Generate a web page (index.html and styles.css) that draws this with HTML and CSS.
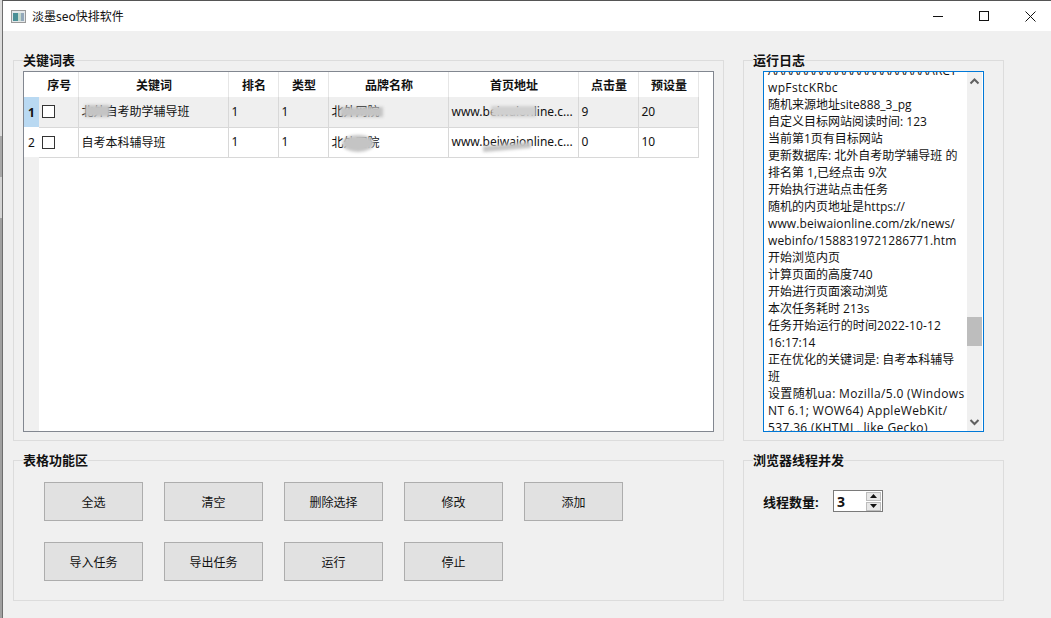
FILE: index.html
```html
<!DOCTYPE html>
<html lang="zh-CN">
<head>
  <meta charset="UTF-8">
  <title>淡墨seo快排软件</title>
  <link rel="stylesheet" href="styles.css">
</head>
<body>

<div class="window">
  <div class="titlebar">
    <svg class="app-icon" width="15" height="13" viewBox="0 0 15 13">
      <rect x="0.5" y="0.5" width="14" height="12" fill="#e4e8ea" stroke="#9a9a9a"/>
      <rect x="2" y="3" width="5" height="8" fill="#4a8f96"/>
      <rect x="7" y="3" width="3" height="8" fill="#c3d8cc"/>
      <rect x="10" y="3" width="3" height="8" fill="#93a8ba"/>
    </svg>
    <span class="title-text">淡墨seo快排软件</span>
    <div class="win-buttons">
      <svg width="11" height="11" viewBox="0 0 11 11"><path d="M0 5.5h10" stroke="#111" fill="none"/></svg>
      <svg width="11" height="11" viewBox="0 0 11 11"><rect x="0.5" y="0.5" width="9" height="9" stroke="#111" fill="none"/></svg>
      <svg width="11" height="11" viewBox="0 0 11 11"><path d="M0.5 0.5l10 10M10.5 0.5l-10 10" stroke="#111" fill="none"/></svg>
    </div>
  </div>

  <div class="content">
    <!-- keyword table -->
    <div class="group">
      <div class="group-title">关键词表</div>
      <div class="table-wrap">
        <table class="keywords">
          <colgroup>
            <col class="c-head"><col class="c-no"><col class="c-word"><col class="c-small"><col class="c-small">
            <col class="c-brand"><col class="c-url"><col class="c-num"><col class="c-num">
          </colgroup>
          <thead>
            <tr>
              <th class="corner"></th>
              <th>序号</th><th>关键词</th><th>排名</th><th>类型</th><th>品牌名称</th><th>首页地址</th><th>点击量</th><th>预设量</th>
            </tr>
          </thead>
          <tbody>
            <tr class="row-alt">
              <td class="row-head current">1</td>
              <td class="check-cell"><span class="check"></span></td>
              <td class="has-blur">北外自考助学辅导班<span class="blur blur-a"></span></td>
              <td>1</td><td>1</td>
              <td class="has-blur">北外网院<span class="blur blur-b"></span></td>
              <td class="has-blur">www.beiwaionline.c...<span class="blur blur-c"></span></td>
              <td>9</td><td>20</td>
            </tr>
            <tr>
              <td class="row-head">2</td>
              <td class="check-cell"><span class="check"></span></td>
              <td>自考本科辅导班</td>
              <td>1</td><td>1</td>
              <td class="has-blur">北外网院<span class="blur blur-d"></span></td>
              <td class="has-blur">www.beiwaionline.c...<span class="blur blur-e"></span></td>
              <td>0</td><td>10</td>
            </tr>
          </tbody>
        </table>
      </div>
    </div>

    <!-- log -->
    <div class="group">
      <div class="group-title">运行日志</div>
      <div class="log-box">
        <div class="log-text">
          <div>AAAAAAAAAAAAAAAAAAAAAARCT</div>
          <div class="wide">wpFstcKRbc</div>
          <div>随机来源地址site888_3_pg</div>
          <div>自定义目标网站阅读时间: 123</div>
          <div>当前第1页有目标网站</div>
          <div>更新数据库: 北外自考助学辅导班 的</div>
          <div>排名第 1,已经点击 9次</div>
          <div>开始执行进站点击任务</div>
          <div>随机的内页地址是https://</div>
          <div class="slight">www.beiwaionline.com/zk/news/</div>
          <div class="slight">webinfo/1588319721286771.htm</div>
          <div>开始浏览内页</div>
          <div>计算页面的高度740</div>
          <div>开始进行页面滚动浏览</div>
          <div>本次任务耗时 213s</div>
          <div class="slight">任务开始运行的时间2022-10-12</div>
          <div>16:17:14</div>
          <div>正在优化的关键词是: 自考本科辅导</div>
          <div>班</div>
          <div class="wide">设置随机ua: Mozilla/5.0 (Windows</div>
          <div class="wide">NT 6.1; WOW64) AppleWebKit/</div>
          <div class="wide">537.36 (KHTML, like Gecko)</div>
        </div>
        <div class="scrollbar">
          <svg class="sb-arrow" width="15" height="17" viewBox="0 0 15 17"><path d="M3.5 11.5l4-4 4 4" stroke="#606060" stroke-width="2" fill="none"/></svg>
          <div class="sb-thumb"></div>
          <svg class="sb-arrow sb-bottom" width="15" height="17" viewBox="0 0 15 17"><path d="M3.5 6l4 4 4-4" stroke="#606060" stroke-width="2" fill="none"/></svg>
        </div>
      </div>
    </div>

    <!-- table actions -->
    <div class="group">
      <div class="group-title">表格功能区</div>
      <div class="actions">
        <div class="action-row">
          <button>全选</button><button>清空</button><button>删除选择</button><button>修改</button><button>添加</button>
        </div>
        <div class="action-row">
          <button>导入任务</button><button>导出任务</button><button>运行</button><button>停止</button>
        </div>
      </div>
    </div>

    <!-- threads -->
    <div class="group">
      <div class="group-title">浏览器线程并发</div>
      <div class="threads">
        <span class="threads-label">线程数量:</span>
        <div class="spin">
          <span class="spin-value">3</span>
          <div class="spin-buttons">
            <span class="spin-btn"><svg width="7" height="4" viewBox="0 0 7 4"><path d="M3.5 0L7 4H0z" fill="#111"/></svg></span>
            <span class="spin-btn"><svg width="7" height="4" viewBox="0 0 7 4"><path d="M0 0h7L3.5 4z" fill="#111"/></svg></span>
          </div>
        </div>
      </div>
    </div>
  </div>
</div>

</body>
</html>
```

FILE: styles.css
```css
* {
  box-sizing: border-box;
}
body {
  margin: 0;
  height: 618px;
  overflow: hidden;
  background: linear-gradient(#dcdcdc 136px, #a8a8a8 136px, #a8a8a8 177px, #d4d4d4 177px, #d4d4d4 218px, #a0a0a0 218px);
  font-family: "Noto Sans", "Noto Sans CJK SC", sans-serif;
  font-size: 12px;
  color: #111;
}
.window {
  height: 618px;
  margin-left: 2px;
  border-top: 1px solid #555;
  border-left: 1px solid #6e6e6e;
  background: #f0f0f0;
}

/* Title bar */
.titlebar {
  display: flex;
  align-items: center;
  height: 30px;
  background: #fff;
  padding-left: 8px;
}
.app-icon {
  margin-right: 6px;
}
.title-text {
  font-size: 12px;
}
.win-buttons {
  display: flex;
  gap: 35px;
  margin-left: auto;
  margin-right: 15px;
}

/* Groups */
.content {
  display: grid;
  grid-template-columns: 711px 261px;
  grid-template-rows: 381px 141px;
  gap: 19px;
  padding: 29px 0 0 10px;
}
.group {
  border: 1px solid #dcdcdc;
  padding: 0 9px;
}
.group-title {
  width: fit-content;
  margin-top: -10px;
  height: 18px;
  line-height: 18px;
  font-size: 13px;
  font-weight: 700;
  background: #f0f0f0;
}

/* Keyword table */
.table-wrap {
  width: 691px;
  height: 361px;
  margin-top: 2px;
  border: 1px solid #828790;
  background: linear-gradient(to right, #f0f0f0 15px, #fff 15px);
}
.keywords {
  border-collapse: collapse;
  table-layout: fixed;
  width: 674px;
}
.c-head { width: 15px; }
.c-no { width: 39px; }
.c-word { width: 150px; }
.c-small { width: 50px; }
.c-brand { width: 120px; }
.c-url { width: 130px; }
.c-num { width: 60px; }
.keywords th {
  height: 25px;
  padding: 0 0 0 2px;
  font-size: 12px;
  font-weight: 700;
  background: #fff;
  border-right: 1px solid #e6e6e6;
}
.keywords th.corner {
  padding: 0;
  border-right: 0;
}
.keywords td {
  height: 30px;
  padding: 0 3px 1px;
  white-space: nowrap;
  border-right: 1px solid #d8d8d8;
  border-bottom: 1px solid #d8d8d8;
}
.keywords td.row-head {
  padding: 0;
  text-align: center;
  background: #fff;
  border-right: 0;
  border-bottom: 0;
}
.keywords td.current {
  background: #b9d9f2;
  font-weight: 700;
}
.row-alt td {
  background: #efefef;
}
.keywords td.check-cell {
  padding: 0 0 0 3px;
  line-height: 0;
}
.check {
  display: inline-block;
  width: 13px;
  height: 13px;
  background: #fff;
  border: 1px solid #333;
}

/* Smudges hiding the brand name */
.has-blur {
  position: relative;
  overflow: hidden;
}
.blur {
  position: absolute;
  background: #c4c4c4;
  filter: blur(1.5px);
}
.blur-a { left: 6px; top: 8px; width: 25px; height: 12px; }
.blur-b { left: 11px; top: 10px; width: 43px; height: 10px; }
.blur-d { left: 13px; top: 7px; width: 32px; height: 17px; border-radius: 50%; }
.blur-c { left: 42px; top: 9px; width: 45px; height: 11px; background: #d0d0d0; }
.blur-e { left: 34px; top: 16px; width: 48px; height: 6px; transform: rotate(-5deg); }

/* Log */
.log-box {
  display: flex;
  width: 221px;
  height: 361px;
  margin: 2px 0 0 10px;
  border: 1px solid #0078d7;
  background: #fff;
  overflow: hidden;
}
.log-text {
  flex: 1;
  min-width: 0;
  margin-top: -10px;
  padding-left: 4px;
  font-family: "Open Sans", "Noto Sans CJK SC", sans-serif;
  line-height: 17px;
  white-space: nowrap;
  overflow: hidden;
}
.log-text .wide {
  letter-spacing: 0.35px;
}
.log-text .slight {
  letter-spacing: 0.12px;
}
.scrollbar {
  display: flex;
  flex-direction: column;
  width: 15px;
  flex-shrink: 0;
  margin-right: 1px;
  background: #f0f0f0;
}
.sb-thumb {
  height: 29px;
  margin-top: 228px;
  background: #bdbdbd;
}
.sb-bottom {
  margin-top: auto;
}

/* Buttons */
.actions {
  display: flex;
  flex-direction: column;
  gap: 21px;
  margin: 13px 0 0 21px;
}
.action-row {
  display: flex;
  gap: 21px;
}
button {
  width: 99px;
  height: 39px;
  padding: 0;
  font-family: inherit;
  font-size: 12px;
  color: #111;
  background: #e1e1e1;
  border: 1px solid #adadad;
}

/* Thread count */
.threads {
  display: flex;
  align-items: center;
  gap: 8px;
  margin: 21px 0 0 10px;
}
.threads-label {
  width: 62px;
  font-size: 13px;
  font-weight: 700;
}
.spin {
  display: flex;
  align-items: center;
  justify-content: space-between;
  width: 50px;
  height: 22px;
  padding: 0 1px 0 3px;
  background: #fff;
  border: 1px solid #7a7a7a;
}
.spin-value {
  font-size: 14px;
  font-weight: 700;
}
.spin-buttons {
  display: flex;
  flex-direction: column;
  gap: 1px;
}
.spin-btn {
  display: flex;
  align-items: center;
  justify-content: center;
  width: 15px;
  height: 9px;
  background: #e8e8e8;
  border: 1px solid #bdbdbd;
}
```
